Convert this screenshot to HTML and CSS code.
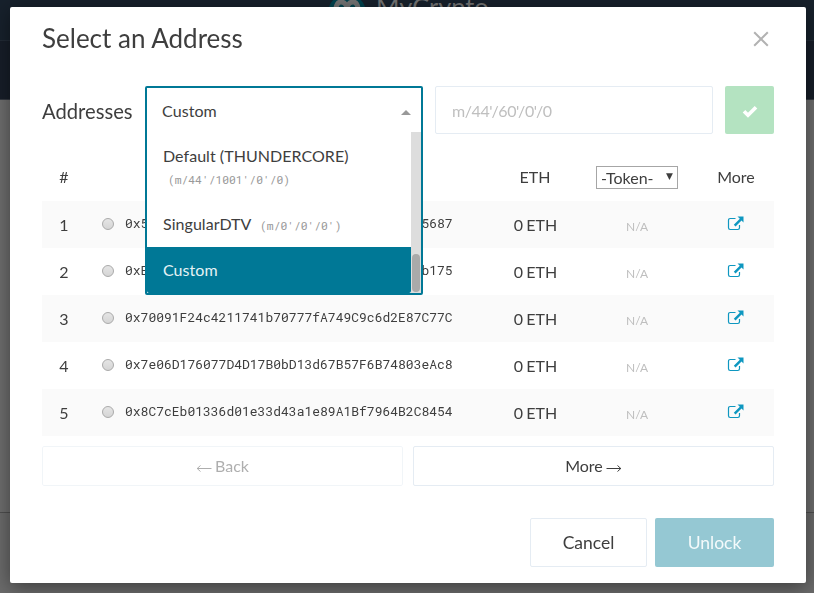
FILE: index.html
```
<!DOCTYPE html>
<html lang="en">
<head>
<meta charset="utf-8">
<title>Select an Address</title>
<link rel="stylesheet" href="styles.css">
</head>
<body>
<svg class="defs" width="0" height="0"><defs>
<symbol id="ext" viewBox="0 0 17 16"><path d="M8.500 2.500H3.200Q1.500 2.500 1.500 4.200v7.600Q1.500 13.500 3.200 13.500h7.600Q12.500 13.500 12.500 11.800V9" fill="none" stroke="#0e97c0" stroke-width="1.200"/><path d="M10.500.500h6v6l-2-2-6 6-1.700-1.700 6-6z" fill="#0e97c0"/></symbol>
</defs></svg>
<header class="site-header">
  <div class="brand"><svg class="logo" width="38" height="38" viewBox="0 0 38 38"><circle cx="19" cy="19" r="19" fill="#00434f"/><path d="M8 14Q9 8 13 8T19 13Q21 8 25 8T30 14" fill="none" stroke="#747474" stroke-width="5"/></svg><span class="brand-name">MyCrypto</span></div>
</header>
<div class="subnav"></div>
<main class="page"></main>
<div class="footer"></div>
<div class="overlay">
<section class="modal">
  <div class="modal-head"><h1>Select an Address</h1><svg class="close" width="16" height="16" viewBox="0 0 16 16"><path d="M1.200 1.200l13.600 13.600M14.800 1.200L1.200 14.800" stroke="#b2b2b2" stroke-width="2"/></svg></div>
  <div class="path-row">
    <span class="label">Addresses</span>
    <div class="select">
      <div class="select-panel">
        <div class="select-value"><span>Custom</span><i class="caret"></i></div>
        <div class="menu">
          <div class="options">
            <div class="option tall">Default (THUNDERCORE)<br><small>(m/44'/1001'/0'/0)</small></div>
            <div class="option">SingularDTV <small>(m/0'/0'/0')</small></div>
            <div class="option active">Custom</div>
          </div>
          <div class="track"><div class="thumb"></div></div>
        </div>
      </div>
    </div>
    <div class="path-input">m/44'/60'/0'/0</div>
    <div class="confirm"><svg width="16" height="13" viewBox="0 0 16 13"><path d="M2 6.200l4 4L14 2.200" fill="none" stroke="#fff" stroke-width="3.700"/></svg></div>
  </div>
  <div class="table">
    <div class="row head"><span>#</span><span></span><span>ETH</span><span><span class="token">-Token-<i>▼</i></span></span><span>More</span></div>
    <div class="row odd"><span>1</span><span class="addr"><i class="radio"></i><span>0x5a0b54D5dc17e0AadC383d2db43B0a0D3E025687</span></span><span class="bal">0 ETH</span><span class="na">N/A</span><span><svg class="ext"><use href="#ext"/></svg></span></div>
    <div class="row"><span>2</span><span class="addr"><i class="radio"></i><span>0xE853c56864A2ebe4576a807D26Fdc4A0adA5b175</span></span><span class="bal">0 ETH</span><span class="na">N/A</span><span><svg class="ext"><use href="#ext"/></svg></span></div>
    <div class="row odd"><span>3</span><span class="addr"><i class="radio"></i><span>0x70091F24c4211741b70777fA749C9c6d2E87C77C</span></span><span class="bal">0 ETH</span><span class="na">N/A</span><span><svg class="ext"><use href="#ext"/></svg></span></div>
    <div class="row"><span>4</span><span class="addr"><i class="radio"></i><span>0x7e06D176077D4D17B0bD13d67B57F6B74803eAc8</span></span><span class="bal">0 ETH</span><span class="na">N/A</span><span><svg class="ext"><use href="#ext"/></svg></span></div>
    <div class="row odd"><span>5</span><span class="addr"><i class="radio"></i><span>0x8C7cEb01336d01e33d43a1e89A1Bf7964B2C8454</span></span><span class="bal">0 ETH</span><span class="na">N/A</span><span><svg class="ext"><use href="#ext"/></svg></span></div>
  </div>
  <div class="pager">
    <div class="btn disabled"><svg width="16" height="8" viewBox="0 0 16 8"><path d="M1 4.500h14.500M4.500 1.500L1.200 4.500l3.300 3" fill="none" stroke="currentColor"/></svg>Back</div>
    <div class="btn">More<svg width="16" height="8" viewBox="0 0 16 8"><path d="M.5 4.500H15M11.500 1.500l3.300 3-3.300 3" fill="none" stroke="currentColor"/></svg></div>
  </div>
  <div class="actions"><div class="btn cancel">Cancel</div><div class="btn unlock">Unlock</div></div>
</section>
</div>
</body>
</html>
```
FILE: styles.css
```
* { box-sizing: border-box; }
body { margin: 0; height: 593px; overflow: hidden; font: 16px/24px Lato, sans-serif; color: #3e3e3e; background: #6e6e6e; }
i { font-style: normal; }
.defs { position: absolute; }
.site-header { height: 40px; background: #17212c; overflow: hidden; }
.brand { display: flex; width: 170px; margin-left: 328px; margin-top: -6px; }
.brand-name { margin-left: 10px; font-size: 25.300px; line-height: 25px; color: #747474; }
.subnav { height: 60px; background: #171e29; border-top: 1px solid #222b36; border-bottom: 1px solid #343941; }
.page { height: 413px; background: #6e6e6e; border-bottom: 1px solid #4f4f4f; }
.footer { height: 80px; background: #6b6b6b; }
.overlay { position: fixed; inset: 0; padding: 7px 8px 10px 10px; }
.modal { height: 576px; padding: 0 32px; background: #fff; border-radius: 2px; box-shadow: 0 4px 20px rgba(0,0,0,.45); }
.modal-head { display: flex; justify-content: space-between; align-items: center; height: 64px; padding-right: 5px; }
h1 { margin: -2px 0 0; font-size: 26px; font-weight: 400; line-height: 32px; }
.path-row { display: flex; height: 83px; padding-top: 15px; }
.label { width: 103px; font-size: 20.2px; line-height: 50px; }
.select { position: relative; width: 278px; height: 48px; }
.select-panel { position: absolute; z-index: 2; top: 0; left: 0; width: 278px; height: 209px; border: 2px solid #007896; border-radius: 2px; background: #fff; }
.select-value { display: flex; justify-content: space-between; align-items: center; height: 44px; padding: 1px 10px 0 15px; letter-spacing: .08px; }
.caret { margin-top: 3px; border: 5px solid transparent; border-top: 0; border-bottom-color: #999; }
.menu { display: flex; height: 161px; }
.options { flex: 1; letter-spacing: .05px; }
.option { height: 46px; padding: 11px 0 0 16px; white-space: nowrap; }
.option.tall { height: 69px; padding-top: 12px; line-height: 23px; }
.option.active { background: #007896; color: #e5f2f5; border-radius: 0 0 2px 2px; }
small { margin-left: 5px; font: 11.300px/20px "Roboto Mono", "Liberation Mono", monospace; letter-spacing: 0; color: #999; }
.tall small { position: relative; top: -1px; }
.track { width: 10px; padding: 122px 1px 1px; background: #ddd; }
.thumb { height: 38px; border-radius: 4px; background: #aaa; }
.path-input { width: 278px; height: 48px; margin-left: 12px; padding-left: 16px; border: 1px solid #e5ecf3; border-radius: 2px; line-height: 47px; color: #bfbfbf; letter-spacing: -.4px; }
.confirm { display: flex; align-items: center; justify-content: center; width: 49px; height: 48px; margin-left: 12px; border-radius: 2px; background: #b4e3c1; padding-top: 2px; }
.row { display: grid; grid-template-columns: 44px 409px 80px 123px 76px; height: 47px; text-align: center; line-height: 47px; }
.row.head { line-height: 45px; }
.odd { background: #fafafa; }
.addr { display: flex; align-items: center; height: 46px; padding-left: 16px; font: 13px/44px "Roboto Mono", "Liberation Mono", monospace; }
.addr span { margin-top: -2px; }
.radio { width: 12px; height: 12px; margin-right: 11px; border: 1px solid #aaa; border-radius: 50%; background: linear-gradient(#e5e5e5, #d5d5d5); }
.bal { word-spacing: -1px; padding-left: 1px; }
.na { font-size: 12px; line-height: 52px; color: #bfbfbf; padding-left: 1px; }
.ext { width: 17px; height: 16px; margin-right: 1px; vertical-align: -1px; }
.token { display: flex; justify-content: space-between; width: 82px; height: 23px; margin: 12px 0 0 21px; padding: 0 4px; border: 1px solid #a6a6a6; line-height: 22px; }
.token i { font: 9px/19px "DejaVu Sans", sans-serif; }
.pager { display: grid; grid-template-columns: 361px 361px; gap: 10px; margin-top: 10px; }
.btn { display: flex; align-items: center; justify-content: center; gap: 3px; height: 40px; border: 1px solid #e5ecf3; border-radius: 2px; }
.btn svg { margin-top: 3px; }
.disabled { opacity: .5; color: #606060; }
.actions { display: flex; justify-content: flex-end; gap: 8px; margin-top: 32px; font-size: 17.500px; }
.cancel, .unlock { width: 117px; height: 49px; padding-top: 1px; }
.unlock { width: 119px; border: 0; background: #95c8d3; color: #f4fafb; }
```
